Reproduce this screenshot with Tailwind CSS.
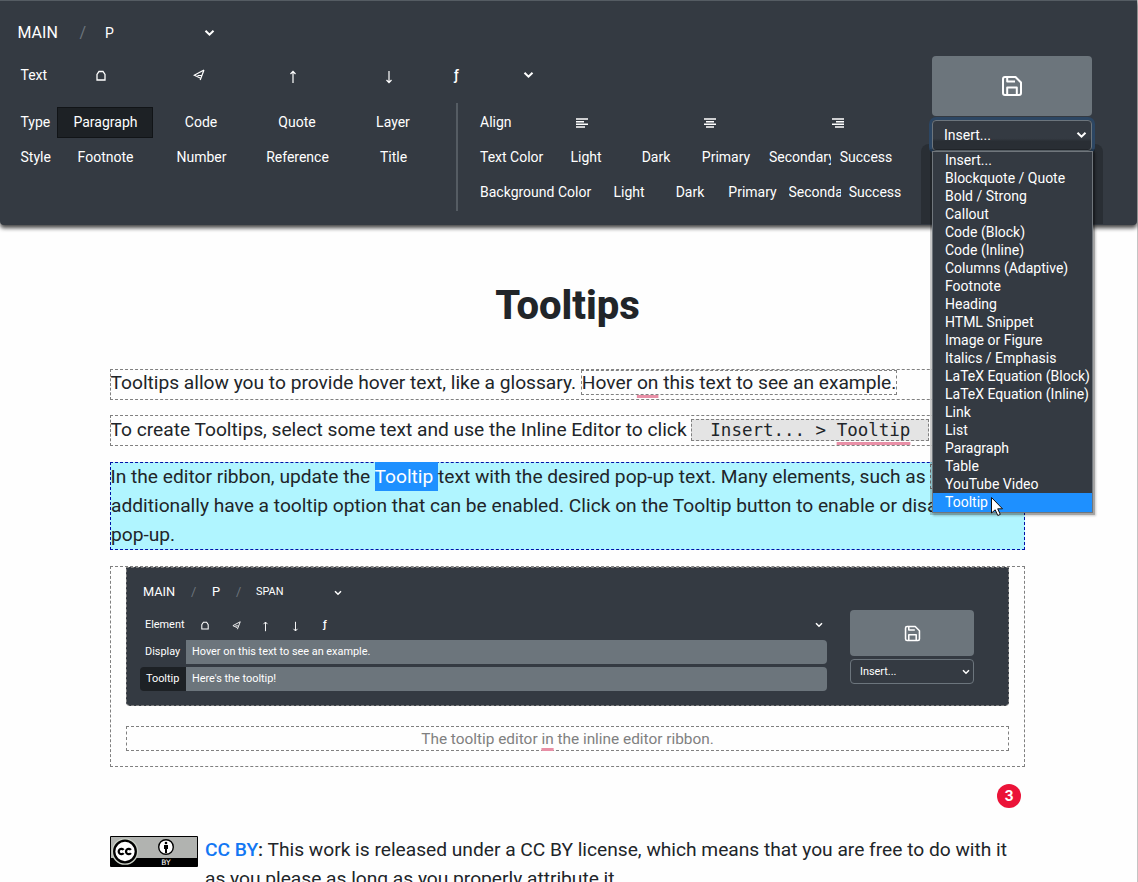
<!DOCTYPE html>
<html lang="en">
<head>
  <meta charset="UTF-8" />
  <meta name="viewport" content="width=device-width, initial-scale=1.0" />
  <title>Tooltips</title>
  <script src="https://cdn.jsdelivr.net/npm/@tailwindcss/browser@4"></script>
</head>
<body class="h-[882px] overflow-hidden bg-[#fefefe] font-[Roboto,sans-serif] text-[#212529]">
  <svg class="hidden">
    <symbol id="chevron" viewBox="0 0 10 8"><path d="M1 1.7 5 5.7 9 1.7" fill="none" stroke="currentColor" stroke-width="2" /></symbol>
    <symbol id="save" viewBox="0 0 22 22"><g fill="none" stroke="currentColor" stroke-width="2" stroke-linejoin="round"><path d="M4 2h10.5L20 7.500V18a2 2 0 0 1-2 2H4a2 2 0 0 1-2-2V4a2 2 0 0 1 2-2z" /><path d="M6.200 2v4.600h7.800M6.200 20v-7.500h9.600V20" /></g></symbol>
    <symbol id="home" viewBox="0 0 10 11"><path d="M1 10V4.500L3 1.500h4l2 3V10z" fill="none" stroke="currentColor" stroke-width="1.300" /></symbol>
    <symbol id="send" viewBox="0 0 12 12"><path d="M11 1 1.200 6.200l6 2.800M11 1 7.200 11M4.500 6.500h4" fill="none" stroke="currentColor" stroke-width="1.200" /></symbol>
    <symbol id="up" viewBox="0 0 8 14"><path d="M4 13V1.500M1.500 4 4 1.300 6.500 4" fill="none" stroke="currentColor" stroke-width="1.200" /></symbol>
    <symbol id="down" viewBox="0 0 8 14"><path d="M4 1v11.500M1.500 10 4 12.700 6.500 10" fill="none" stroke="currentColor" stroke-width="1.200" /></symbol>
  </svg>

  <div class="relative h-full border-r border-[#c4c4c4]">
    <!-- Ribbon -->
    <header class="relative z-10 flex h-[225px] rounded-b border-t border-[#555c63] bg-[#343a42] text-sm leading-none text-white shadow-[0_3px_4px_#444]">
      <div class="w-[932px]">
        <div class="flex h-[62px] items-center pt-0.5 pl-[17.5px]">
          <span class="w-[62px] text-base leading-none">MAIN</span>
          <span class="w-[25.500px] text-base leading-none text-[#6c757d]">/</span>
          <span class="w-[99px]">P</span>
          <svg class="h-2 w-[11px]"><use href="#chevron" /></svg>
        </div>
        <div class="flex h-[24px] items-center pl-[20.500px]">
          <span class="w-[75.500px]">Text</span>
          <svg class="h-[11px] w-[10px]"><use href="#home" /></svg>
          <svg class="ml-[87px] h-3 w-3"><use href="#send" /></svg>
          <svg class="mt-1 ml-[84px] h-3.5 w-2"><use href="#up" /></svg>
          <svg class="mt-1 ml-[88px] h-3.5 w-2"><use href="#down" /></svg>
          <span class="ml-[61px] w-[69px] font-medium">ƒ</span>
          <svg class="h-2 w-[11px]"><use href="#chevron" /></svg>
        </div>
        <div class="mt-[16px] flex">
          <div class="w-[456px] pt-[4px]">
            <div class="flex h-[31px] items-center pl-[20.500px]">
              <span class="w-[36.500px] pb-0.5">Type</span>
              <span class="flex h-[31px] w-24 items-center justify-center border border-[#111417] bg-[#1d2125] pb-0.5 pl-px">Paragraph</span>
              <span class="w-24 pb-0.5 text-center">Code</span>
              <span class="w-24 pb-0.5 text-center">Quote</span>
              <span class="w-24 pb-0.5 text-center">Layer</span>
            </div>
            <div class="mt-1 flex h-[31px] items-center pb-0.5 pl-[20.500px]">
              <span class="w-[37px]">Style</span>
              <span class="w-24 text-center">Footnote</span>
              <span class="w-24 text-center">Number</span>
              <span class="w-24 text-center">Reference</span>
              <span class="w-24 text-center">Title</span>
            </div>
          </div>
          <div class="flex h-[108px] flex-col gap-1 border-l-2 border-[#555c63] pt-1 pl-[22px]">
            <div class="flex h-[31px] items-center">
              <span class="w-[38px] pb-0.5">Align</span>
              <span class="flex w-32 justify-center"><svg class="h-2.5 w-3" viewBox="0 0 12 10"><path d="M0 1h12M0 3.700h8M0 6.300h12M0 9h9" stroke="#fff" stroke-width="1.400" /></svg></span>
              <span class="flex w-32 justify-center"><svg class="h-2.5 w-3" viewBox="0 0 12 10"><path d="M0 1h12M2 3.700h8M0 6.300h12M2 9h8" stroke="#fff" stroke-width="1.400" /></svg></span>
              <span class="flex w-[127px] justify-center"><svg class="h-2.5 w-3" viewBox="0 0 12 10"><path d="M0 1h12M4 3.700h8M0 6.300h12M3 9h9" stroke="#fff" stroke-width="1.400" /></svg></span>
            </div>
            <div class="flex h-[31px] items-center pb-0.5 leading-5">
              <span class="w-[71px] whitespace-nowrap">Text Color</span>
              <span class="w-[70px] text-center">Light</span>
              <span class="w-[70px] text-center">Dark</span>
              <span class="w-[70px] text-center">Primary</span>
              <span class="w-[70px] overflow-hidden pl-2">Secondary</span>
              <span class="w-[70px] text-center">Success</span>
            </div>
            <div class="flex h-[31px] items-center pb-0.5 leading-5">
              <span class="w-[118.500px] whitespace-nowrap">Background Color</span>
              <span class="w-[61px] text-center">Light</span>
              <span class="w-[61px] text-center">Dark</span>
              <span class="w-[64px] text-center">Primary</span>
              <span class="ml-1 w-[52px] overflow-hidden">Secondary</span>
              <span class="ml-1 w-[61px] text-center">Success</span>
            </div>
          </div>
        </div>
      </div>
      <div class="w-40 pt-[55px]">
        <button class="flex h-[60px] w-full items-center justify-center rounded bg-[#6c757c]"><svg class="h-[22px] w-[22px]"><use href="#save" /></svg></button>
        <div class="relative mt-1">
          <div class="absolute top-6 -left-[11px] h-20 w-[182px] rounded-t-lg bg-[#292e34]"></div>
          <div class="relative flex h-[31px] items-center justify-between rounded border border-[#6c757d] bg-linear-to-b from-[#343a42] from-60% to-[#292e34] to-70% pr-1 pb-0.5 pl-[11px] shadow-[0_0_0_3px_#2c4663]">
            <span>Insert...</span>
            <svg class="h-2 w-[11px]"><use href="#chevron" /></svg>
          </div>
          <ul class="absolute top-[31px] left-0 w-[161px] border border-[#70767c] bg-[#343a42] leading-[18px] whitespace-nowrap shadow-[0_0_0_2px_#0003,2px_2px_2px_1px_#0003]">
            <li class="-mt-px pl-3">Insert...</li>
            <li class="pl-3">Blockquote / Quote</li>
            <li class="pl-3">Bold / Strong</li>
            <li class="pl-3">Callout</li>
            <li class="pl-3">Code (Block)</li>
            <li class="pl-3">Code (Inline)</li>
            <li class="pl-3">Columns (Adaptive)</li>
            <li class="pl-3">Footnote</li>
            <li class="pl-3">Heading</li>
            <li class="pl-3">HTML Snippet</li>
            <li class="pl-3">Image or Figure</li>
            <li class="pl-3">Italics / Emphasis</li>
            <li class="pl-3">LaTeX Equation (Block)</li>
            <li class="pl-3">LaTeX Equation (Inline)</li>
            <li class="pl-3">Link</li>
            <li class="pl-3">List</li>
            <li class="pl-3">Paragraph</li>
            <li class="pl-3">Table</li>
            <li class="pl-3">YouTube Video</li>
            <li class="bg-[#1e90ff] pb-px pl-3">Tooltip</li>
          </ul>
          <svg class="absolute top-[376px] left-[58px] h-[21px] w-[14px]" viewBox="0 0 14 21"><path d="M1.500 1.500v15.500l3.700-3.200 2.600 5.700 2.500-1.100-2.600-5.600h4.800z" fill="#fff" stroke="#111" stroke-width="1" /></svg>
        </div>
      </div>
    </header>

    <!-- Page content -->
    <main class="ml-[110px] w-[915px] text-[19.2px] leading-[28.8px] tracking-[-0.01px]">
      <h1 class="pt-[57px] text-center text-[40px] leading-[48px] font-extrabold">Tooltips</h1>
      <p class="mt-[39px] h-[31px] border border-dashed border-[#808080] -indent-[0.5px] leading-[26px] whitespace-nowrap">Tooltips allow you to provide hover text, like a glossary. <span class="border border-dashed border-[#808080]">Hover <u class="decoration-[#e88fa6] decoration-3 underline-offset-[6px]">on</u> this text to see an example.</span></p>
      <p class="mt-[15px] h-[31px] border border-dashed border-[#808080] -indent-[0.5px] whitespace-nowrap">To create Tooltips, select some text and use the Inline Editor to click <code class="border border-dashed border-[#808080] bg-[#e4e4e4] px-[18px] font-['DejaVu_Sans_Mono',monospace] text-[17.500px]">Insert... &gt; <u class="decoration-[#e88fa6] decoration-3 underline-offset-[6px]">Tooltip</u></code></p>
      <p class="mt-4 h-[88px] border border-dashed border-[#0010a8] bg-[#b0f5ff] -indent-[0.5px] whitespace-nowrap">In the editor ribbon, update the <span class="bg-[#1e90ff] py-[3px] text-white">Tooltip </span>text with the desired pop-up text. Many elements, such as <span class="ml-1 border border-dashed border-[#808080] px-2"></span><br />additionally have a tooltip option that can be enabled. Click on the Tooltip button to enable or disable<br />pop-up.</p>

      <figure class="mt-4 h-[201px] border border-dashed border-[#808080] px-[15px] leading-none">
        <div class="flex h-[139px] rounded-b border border-dashed border-[#808080] bg-[#343a42] text-[10.900px] text-white">
          <div class="w-[723px] pl-[13px]">
            <div class="flex h-12 items-center pt-px pl-[3px]">
              <span class="w-12 text-[12.800px]">MAIN</span>
              <span class="w-[21px] text-[12.800px] text-[#6c757d]">/</span>
              <span class="w-[24px] text-[12.800px]">P</span>
              <span class="w-[20px] text-[12.800px] text-[#6c757d]">/</span>
              <span class="w-[78px]">SPAN</span>
              <svg class="h-1.5 w-2"><use href="#chevron" /></svg>
            </div>
            <div class="flex h-[24px] items-center pb-1.5 pl-[5px]">
              <span class="w-[56px]">Element</span>
              <svg class="h-[9px] w-2"><use href="#home" /></svg>
              <svg class="ml-[23px] h-[9px] w-[9px]"><use href="#send" /></svg>
              <svg class="mt-0.5 ml-[21px] h-[11px] w-[7px]"><use href="#up" /></svg>
              <svg class="mt-0.5 ml-[23px] h-[11px] w-[7px]"><use href="#down" /></svg>
              <span class="ml-[24px] grow font-medium">ƒ</span>
              <svg class="mr-[27px] h-1.5 w-2"><use href="#chevron" /></svg>
            </div>
            <div class="flex h-6 w-[687px] items-center">
              <span class="w-[46px] pl-[5px]">Display</span>
              <span class="flex h-6 grow items-center rounded-r-sm bg-[#6c757c] pl-1.5">Hover on this text to see an example.</span>
            </div>
            <div class="mt-[3px] flex h-6 w-[687px] items-center">
              <span class="flex h-6 w-[46px] items-center rounded-l-sm bg-[#1d2125] pl-1.5">Tooltip</span>
              <span class="flex h-6 grow items-center rounded-r-sm bg-[#6c757c] pl-1.5">Here's the tooltip!</span>
            </div>
          </div>
          <div class="w-[124px] pt-[42px]">
            <div class="flex h-[46px] items-center justify-center rounded-sm bg-[#6c757c]"><svg class="h-[17px] w-[17px]"><use href="#save" /></svg></div>
            <div class="mt-[3px] flex h-[25px] items-center justify-between rounded-sm border border-[#6c757d] pr-[3px] pl-[9px]">
              <span class="pt-px">Insert...</span>
              <svg class="h-1.5 w-2"><use href="#chevron" /></svg>
            </div>
          </div>
        </div>
        <figcaption class="mt-5 h-[25px] border border-dashed border-[#808080] text-center text-[15.400px] leading-6 text-[#808080]">The tooltip editor <u class="decoration-[#e88fa6] decoration-3 underline-offset-[4px]">in</u> the inline editor ribbon.</figcaption>
      </figure>

      <div class="mt-[17px] mr-1 flex justify-end">
        <span class="flex h-6 w-6 items-center justify-center rounded-full bg-[#eb1338] font-[Inter,sans-serif] text-sm font-bold text-white">3</span>
      </div>

      <div class="mt-[27px] flex whitespace-nowrap">
        <svg class="mt-[1px] h-[31px] w-[88px] shrink-0" viewBox="0 0 88 31">
          <rect width="88" height="31" rx="1" fill="#000" />
          <path d="M1 1h86v21H1z" fill="#b1b3b0" />
          <circle cx="15" cy="15.500" r="13.300" fill="#c9cfc5" />
          <circle cx="15" cy="15.500" r="10.800" fill="#fff" stroke="#000" stroke-width="2.300" />
          <g fill="none" stroke="#000" stroke-width="2.300"><path d="M13.600 13.900a2.700 2.700 0 1 0 0 3.200M20.900 13.900a2.700 2.700 0 1 0 0 3.200" /></g>
          <circle cx="56" cy="11" r="7.300" fill="#fff" stroke="#000" stroke-width="1.400" />
          <circle cx="56" cy="7" r="1.300" /><path d="M54 9h4v4h-1v4h-2v-4h-1z" />
          <text x="56" y="29" font-family="DejaVu Sans" font-size="7.500" fill="#fff" text-anchor="middle">BY</text>
        </svg>
        <p class="mt-px ml-[7px]"><b class="font-medium"><span class="text-[#1277f3]">CC BY</span>:</b> This work is released under a CC BY license, which means that you are free to do with it<br />as you please as long as you properly attribute it.</p>
      </div>
    </main>
  </div>
</body>
</html>
